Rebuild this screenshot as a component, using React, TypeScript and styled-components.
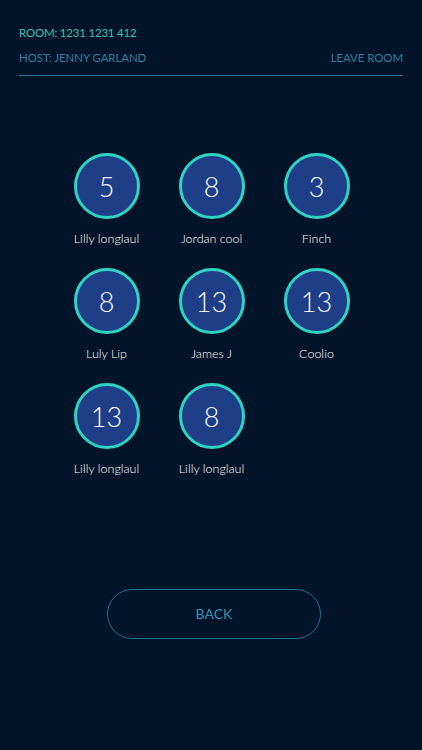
import React from 'react';
import styled, { createGlobalStyle } from 'styled-components';

const players = [
  { id: 1, score: 5, name: 'Lilly longlaul' },
  { id: 2, score: 8, name: 'Jordan cool' },
  { id: 3, score: 3, name: 'Finch' },
  { id: 4, score: 8, name: 'Luly Lip' },
  { id: 5, score: 13, name: 'James J' },
  { id: 6, score: 13, name: 'Coolio' },
  { id: 7, score: 13, name: 'Lilly longlaul' },
  { id: 8, score: 8, name: 'Lilly longlaul' },
];

const GlobalStyle = createGlobalStyle`
  html, body {
    margin: 0;
    padding: 0;
    background: #021429;
  }
  body {
    font-family: Lato, "Open Sans", sans-serif;
  }
`;

function App() {
  return (
    <Page>
      <GlobalStyle />
      <Header>
        <RoomCode>ROOM: 1231 1231 412</RoomCode>
        <HostRow>
          <HostText>HOST: JENNY GARLAND</HostText>
          <LeaveButton>LEAVE ROOM</LeaveButton>
        </HostRow>
      </Header>
      <PlayerGrid>
        {players.map((p) => (
          <Player key={p.id}>
            <ScoreCircle>{p.score}</ScoreCircle>
            <PlayerName>{p.name}</PlayerName>
          </Player>
        ))}
      </PlayerGrid>
      <Footer>
        <BackButton>BACK</BackButton>
      </Footer>
    </Page>
  );
}

const Page = styled.div`
  width: 422px;
  height: 750px;
  background: #021429;
  display: flex;
  flex-direction: column;
  box-sizing: border-box;
`;

const Header = styled.header`
  margin: 0 19px;
  padding-top: 25px;
  padding-bottom: 10px;
  border-bottom: 1px solid #2a7e9c;
`;

const RoomCode = styled.div`
  font-size: 11.5px;
  line-height: 15px;
  color: #35c2ae;
  letter-spacing: -0.2px;
`;

const HostRow = styled.div`
  display: flex;
  justify-content: space-between;
  align-items: center;
  margin-top: 10px;
`;

const HostText = styled.span`
  font-size: 11.5px;
  line-height: 15px;
  color: #2f7f9c;
  letter-spacing: -0.1px;
`;

const LeaveButton = styled.button`
  background: none;
  border: none;
  padding: 0;
  font-family: inherit;
  font-size: 11.5px;
  line-height: 15px;
  color: #2f7f9c;
  letter-spacing: -0.1px;
  cursor: pointer;
`;

const PlayerGrid = styled.div`
  display: grid;
  grid-template-columns: repeat(3, 105px);
  justify-content: center;
  row-gap: 21px;
  margin-top: 77px;
  padding-left: 1px;
`;

const Player = styled.div`
  display: flex;
  flex-direction: column;
  align-items: center;
`;

const ScoreCircle = styled.div`
  width: 60px;
  height: 60px;
  border-radius: 50%;
  border: 3px solid #2ed4c1;
  background: #1e3e88;
  color: #ffffff;
  display: flex;
  align-items: center;
  justify-content: center;
  font-size: 27px;
  font-weight: 300;
`;

const PlayerName = styled.div`
  margin-top: 12px;
  font-size: 12.5px;
  line-height: 16px;
  font-weight: 300;
  color: #ffffff;
`;

const Footer = styled.div`
  display: flex;
  justify-content: center;
  margin-top: 112px;
  padding-left: 6px;
`;

const BackButton = styled.button`
  width: 214px;
  height: 50px;
  border-radius: 25px;
  border: 1px solid #236f8e;
  background: transparent;
  color: #3592b3;
  font-family: inherit;
  font-size: 14px;
  padding-bottom: 3px;
  cursor: pointer;
`;

export default App;
